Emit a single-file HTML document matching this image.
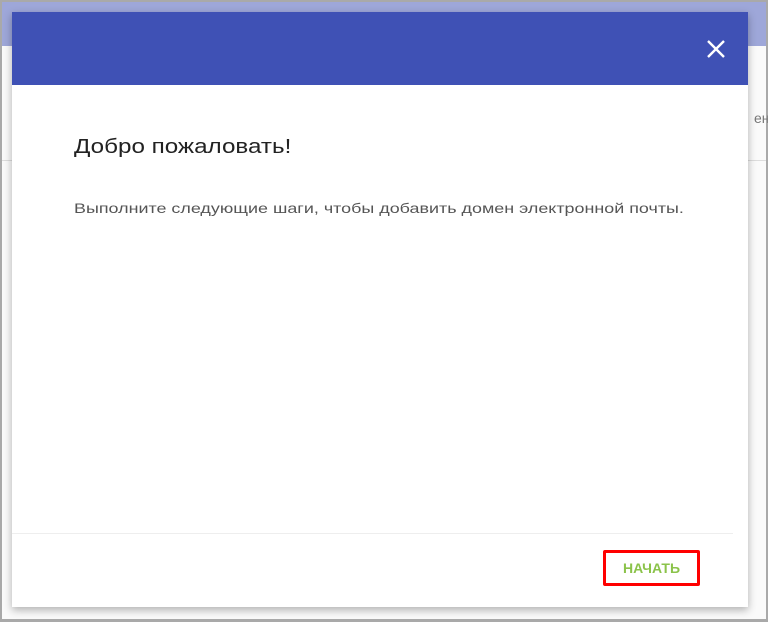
<!DOCTYPE html>
<html><head><meta charset="utf-8"><style>
html,body{margin:0;padding:0}
body{width:768px;height:622px;position:relative;overflow:hidden;background:#a9a9a9;font-family:"Liberation Sans",sans-serif}
.inner{position:absolute;left:2px;top:2px;right:2px;bottom:3px;background:#fafafa}
.band{position:absolute;left:0;top:0;right:0;height:44px;background:#9ea7d9}
.bgline{position:absolute;left:0;right:0;top:158px;height:1px;background:#ddd}
.en{position:absolute;left:752px;top:108px;font-size:14px;color:#777}
.dlg{position:absolute;left:12px;top:12px;width:736px;height:595px;background:#fff;box-shadow:0 3px 8px rgba(0,0,0,.3)}
.hdr{height:73px;background:#3f51b5;position:relative}
.x{position:absolute;left:694px;top:27px}
h1{position:absolute;left:62px;top:124px;margin:0;font-weight:normal;font-size:20px;color:#222;white-space:nowrap;transform:scaleX(1.21);transform-origin:0 0}
p{position:absolute;left:62px;top:188px;margin:0;font-size:14px;color:#555;white-space:nowrap;transform:scaleX(1.28);transform-origin:0 0}
.sep{position:absolute;left:0;top:521px;width:721px;height:1px;background:#eee}
.btn{position:absolute;left:591px;top:538px;width:97px;height:36px;box-sizing:border-box;border:3px solid #f00;border-radius:2px;text-align:center;line-height:30px;font-weight:bold;font-size:14px;color:#8bc34a}
</style></head><body>
<div class="inner"><div class="band"></div><div class="bgline"></div><div class="en">ен</div></div>
<div class="dlg">
<div class="hdr"><svg class="x" width="20" height="20" viewBox="0 0 20 20"><path d="M2 2L18 18M18 2L2 18" stroke="#fff" stroke-width="2.4"/></svg></div>
<h1>Добро пожаловать!</h1>
<p>Выполните следующие шаги, чтобы добавить домен электронной почты.</p>
<div class="sep"></div>
<div class="btn">НАЧАТЬ</div>
</div>
</body></html>
